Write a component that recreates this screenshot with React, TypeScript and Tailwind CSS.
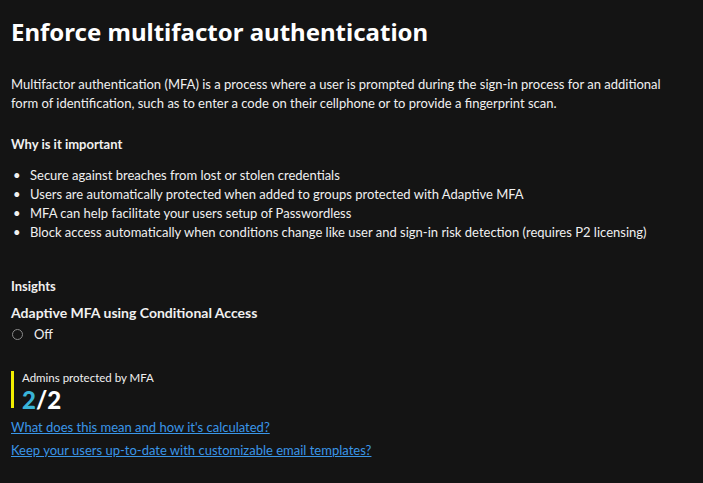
import React from "react";

const bullets = [
	"Secure against breaches from lost or stolen credentials",
	"Users are automatically protected when added to groups protected with Adaptive MFA",
	"MFA can help facilitate your users setup of Passwordless",
	"Block access automatically when conditions change like user and sign-in risk detection (requires P2 licensing)",
];

export default function App() {
	return (
		<div
			className="h-[483px] w-[703px] overflow-hidden bg-[#141414] px-[11px] text-[13px] text-[#f0f0f0]"
			style={{ fontFamily: 'Lato, "Noto Sans", sans-serif' }}
		>
			<h1
				className="pt-[16px] text-[24px] font-bold leading-[32px] text-white"
				style={{ fontFamily: '"Noto Sans", sans-serif' }}
			>
				Enforce multifactor authentication
			</h1>

			<p className="mt-[27px] max-w-[665px] leading-[19px]">
				Multifactor authentication (MFA) is a process where a user is prompted during the sign-in process for an additional
				form of identification, such as to enter a code on their cellphone or to provide a fingerprint scan.
			</p>

			<h2 className="mt-[22px] font-bold leading-[19px]">Why is it important</h2>

			<ul className="mt-[12px] leading-[19px]">
				{bullets.map((b) => (
					<li key={b} className="flex">
						<span className="w-[19px] shrink-0 pl-[2px]">•</span>
						<span>{b}</span>
					</li>
				))}
			</ul>

			<h2 className="mt-[35px] font-bold leading-[19px]">Insights</h2>

			<div className="mt-[7px] text-[14px] font-bold leading-[19px]">Adaptive MFA using Conditional Access</div>

			<div className="mt-[3px] flex items-center gap-[11px] leading-[19px]">
				<span className="ml-[1px] h-[11px] w-[11px] rounded-full border border-[#8a8a8a]" />
				<span>Off</span>
			</div>

			<div className="mt-[27px] flex items-start gap-[8px]">
				<div className="h-[37px] w-[3px] bg-[#f2ee00]" />
				<div className="flex flex-col">
					<div className="text-[11.5px] leading-[14px]">Admins protected by MFA</div>
					<div className="text-[24px] font-black leading-[29px]">
						<span className="text-[#3ab4d8]">2</span>
						<span className="text-white">/2</span>
					</div>
				</div>
			</div>

			<div className="mt-[4px] flex flex-col gap-[4px] leading-[19px]">
				<a href="#" className="w-fit text-[#3a96e8] underline">
					What does this mean and how it's calculated?
				</a>
				<a href="#" className="w-fit text-[#3a96e8] underline">
					Keep your users up-to-date with customizable email templates?
				</a>
			</div>
		</div>
	);
}
